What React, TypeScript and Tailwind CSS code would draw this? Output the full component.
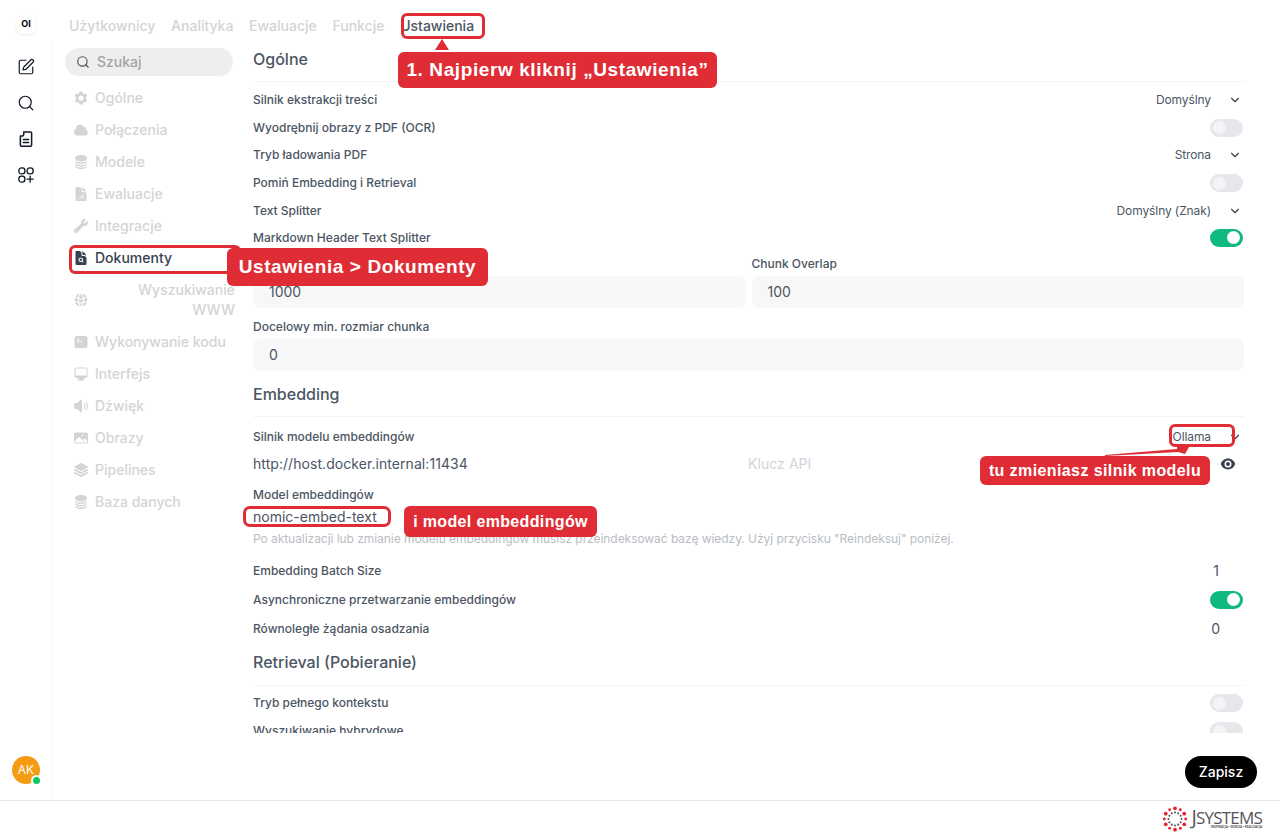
import { SquarePen, Search, ChevronDown } from 'lucide-react';
import {
  HiCog6Tooth,
  HiCloud,
  HiCircleStack,
  HiDocumentChartBar,
  HiWrench,
  HiDocumentMagnifyingGlass,
  HiGlobeAlt,
  HiCommandLine,
  HiComputerDesktop,
  HiSpeakerWave,
  HiPhoto,
  HiSquare3Stack3D,
  HiEye,
} from 'react-icons/hi2';

const tabs = ['Użytkownicy', 'Analityka', 'Ewaluacje', 'Funkcje'];

const navTop = [
  { label: 'Ogólne', icon: HiCog6Tooth },
  { label: 'Połączenia', icon: HiCloud },
  { label: 'Modele', icon: HiCircleStack },
  { label: 'Ewaluacje', icon: HiDocumentChartBar },
  { label: 'Integracje', icon: HiWrench },
];

const navBottom = [
  { label: 'Wykonywanie kodu', icon: HiCommandLine },
  { label: 'Interfejs', icon: HiComputerDesktop },
  { label: 'Dźwięk', icon: HiSpeakerWave },
  { label: 'Obrazy', icon: HiPhoto },
  { label: 'Pipelines', icon: HiSquare3Stack3D },
  { label: 'Baza danych', icon: HiCircleStack },
];

function Toggle({ on = false }: { on?: boolean }) {
  return (
    <div className={`mr-[1px] flex h-[18px] w-[33px] items-center rounded-full px-[3px] ${on ? 'justify-end bg-[#10b981]' : 'justify-start bg-[#e5e7eb]'}`}>
      <div className={`h-[13px] w-[13px] rounded-full ${on ? 'bg-white' : 'bg-[#f3f4f6]'}`} />
    </div>
  );
}

function Row({ label, h, children }: { label: string; h: string; children?: React.ReactNode }) {
  return (
    <div className={`flex items-center justify-between text-xs font-medium text-[#4b5563] ${h}`}>
      <span>{label}</span>
      {children}
    </div>
  );
}

function Picker({ value }: { value: string }) {
  return (
    <div className="flex items-center gap-[17px] pr-[2px] text-xs font-normal tracking-[-0.1px] text-[#4b5563]">
      <span>{value}</span>
      <ChevronDown size={14} strokeWidth={2} className="text-[#374151]" />
    </div>
  );
}

function Heading({ text, mt, hr = 'mt-[10px]' }: { text: string; mt: string; hr?: string }) {
  return (
    <div className={mt}>
      <div className="flex h-[24px] items-center text-base font-medium text-[#4b5563]">{text}</div>
      <div className={`border-t border-[#f3f4f6] ${hr}`} />
    </div>
  );
}

function Field({ value, className }: { value: string; className: string }) {
  return <div className={`flex h-[32px] items-center rounded-lg bg-[#f7f7f7] px-4 text-sm font-normal text-[#4b5563] ${className}`}>{value}</div>;
}

function Callout({ text, className }: { text: string; className: string }) {
  return (
    <div className={`absolute flex items-center justify-center rounded-[6px] bg-[#e02d35] font-['Liberation_Sans',sans-serif] font-bold text-white ${className}`}>
      {text}
    </div>
  );
}

function Logo() {
  const dots = Array.from({ length: 12 }, (_, i) => (i * Math.PI) / 6);
  return (
    <div className="flex items-center gap-[3px]">
      <svg width="26" height="26" viewBox="-14 -14 28 28">
        {dots.map((a, i) => (
          <circle key={i} cx={Math.sin(a) * 11.5} cy={-Math.cos(a) * 11.5} r={i % 2 === 0 ? 2 : 1.5} fill="#e8212c" />
        ))}
        {dots.map((a, i) => (
          <circle key={i} cx={Math.sin(a) * 7} cy={-Math.cos(a) * 7} r="1.1" fill="#55565a" />
        ))}
      </svg>
      <div className="flex flex-col items-end font-['Open_Sans',sans-serif] text-[#55565a]">
        <div className="text-[17px] leading-[15px] tracking-[-0.8px]">
          <span className="text-[20px]">J</span>SYSTEMS
        </div>
        <div className="text-[3px] leading-[4px] font-bold">INSPIRACJA • WIEDZA • REALIZACJA</div>
      </div>
    </div>
  );
}

export default function App() {
  return (
    <div className="relative flex h-[836px] w-[1280px] flex-col overflow-hidden bg-white font-['Inter',sans-serif]">
      <div className="flex h-[801px] shrink-0 border-b border-[#e5e5e5]">
        {/* icon rail */}
        <aside className="flex w-[52px] flex-col items-center pt-[14px] text-[#111827]">
          <div className="flex h-[20px] w-[20px] items-center justify-center rounded-md text-[9px] font-bold text-black shadow-[0_1px_2px_rgba(0,0,0,0.08)]">OI</div>
          <div className="mt-[24px] flex flex-col items-center gap-[18px]">
            <SquarePen size={18} strokeWidth={1.6} />
            <Search size={18} strokeWidth={1.6} />
            <svg width="18" height="18" viewBox="0 0 24 24" fill="none" stroke="currentColor" strokeWidth="2" strokeLinejoin="round" strokeLinecap="round">
              <path d="M9 2.500h9a1.500 1.500 0 0 1 1.500 1.500v16a1.500 1.500 0 0 1-1.500 1.500H6A1.500 1.500 0 0 1 4.500 20V8H7a2 2 0 0 0 2-2z" />
              <path d="M8.500 12.500h7M8.500 16.500h7" />
            </svg>
            <svg width="18" height="18" viewBox="0 0 24 24" fill="none" stroke="currentColor" strokeWidth="1.800" strokeLinecap="round">
              <rect x="2.500" y="2.500" width="8" height="8" rx="3.500" />
              <rect x="13.500" y="2.500" width="8" height="8" rx="3.500" />
              <rect x="2.500" y="13.500" width="8" height="8" rx="3.500" />
              <path d="M17.500 13.500v8M13.500 17.500h8" />
            </svg>
          </div>
          <div className="relative mt-auto mb-[16px] flex h-[28px] w-[28px] items-center justify-center rounded-full bg-[#f59c12] text-xs text-white">
            AK
            <span className="absolute right-[-2px] bottom-[-2px] h-[11px] w-[11px] rounded-full border-2 border-white bg-[#0fc95f]" />
          </div>
        </aside>

        <div className="flex min-w-0 flex-1 flex-col">
          {/* tabs */}
          <div className="flex h-[42px] items-start gap-[15.7px] pt-[16px] pl-[17px] text-sm leading-[20px] font-medium text-[#d4d4d4]">
            {tabs.map((t) => (
              <span key={t}>{t}</span>
            ))}
            <span className="text-[#4b5563]">Ustawienia</span>
          </div>

          <div className="flex min-h-0 flex-1">
            {/* settings nav */}
            <nav className="h-[758px] w-[201px] border-l border-[#f7f7f7] pt-[6px] pr-[18px] pl-[12px] text-sm font-medium text-[#d4d4d4]">
              <div className="flex h-[28px] w-[168px] items-center gap-[7px] rounded-full bg-[#eeeeee] px-[11px] text-[#a3a3a3]">
                <Search size={14} strokeWidth={2} className="text-[#4b5563]" />
                <span>Szukaj</span>
              </div>
              <div className="mt-[6px]">
                {navTop.map((n) => (
                  <div key={n.label} className="flex h-[32px] items-center gap-[6px] pl-[8px]">
                    <n.icon size={16} />
                    <span>{n.label}</span>
                  </div>
                ))}
                <div className="flex h-[32px] items-center gap-[6px] pl-[8px] text-[#374151]">
                  <HiDocumentMagnifyingGlass size={16} />
                  <span>Dokumenty</span>
                </div>
                <div className="flex h-[52px] items-center justify-between pl-[8px]">
                  <HiGlobeAlt size={16} />
                  <span className="w-[110px] text-right leading-[20px]">Wyszukiwanie WWW</span>
                </div>
                {navBottom.map((n) => (
                  <div key={n.label} className="flex h-[32px] items-center gap-[6px] pl-[8px]">
                    <n.icon size={16} />
                    <span>{n.label}</span>
                  </div>
                ))}
              </div>
            </nav>

            {/* settings body */}
            <main className="relative min-w-0 flex-1">
              <div className="h-[691px] w-[991px] overflow-hidden">
                <Heading text="Ogólne" mt="mt-[5px]" />
                <div className="pt-[4px]">
                  <Row label="Silnik ekstrakcji treści" h="h-[28px]"><Picker value="Domyślny" /></Row>
                  <Row label="Wyodrębnij obrazy z PDF (OCR)" h="h-[27px]"><Toggle /></Row>
                  <Row label="Tryb ładowania PDF" h="h-[28px]"><Picker value="Strona" /></Row>
                  <Row label="Pomiń Embedding i Retrieval" h="h-[28px]"><Toggle /></Row>
                  <Row label="Text Splitter" h="h-[27px]"><Picker value="Domyślny (Znak)" /></Row>
                  <Row label="Markdown Header Text Splitter" h="h-[27px]"><Toggle on /></Row>
                </div>
                <div className="mt-[3px] flex gap-[6px] text-xs font-medium text-[#4b5563]">
                  <div className="flex-1">
                    <div className="h-[20px] leading-[20px]">Rozmiar chunka</div>
                    <Field value="1000" className="mt-[2px]" />
                  </div>
                  <div className="flex-1">
                    <div className="h-[20px] leading-[20px]">Chunk Overlap</div>
                    <Field value="100" className="mt-[2px]" />
                  </div>
                </div>
                <div className="mt-[9px] h-[20px] text-xs leading-[20px] font-medium text-[#4b5563]">Docelowy min. rozmiar chunka</div>
                <Field value="0" className="mt-[2px]" />

                <Heading text="Embedding" mt="mt-[11px]" />
                <div className="pt-[6px]">
                  <Row label="Silnik modelu embeddingów" h="h-[28px]"><Picker value="Ollama" /></Row>
                </div>
                <div className="flex h-[26px] items-center text-sm tracking-[0.06px] text-[#4b5563]">
                  <span className="w-[495px]">http://host.docker.internal:11434</span>
                  <span className="text-[#d1d5db]">Klucz API</span>
                  <HiEye size={16} className="mr-[8px] ml-auto text-[#374151]" />
                </div>
                <div className="mt-[8px] h-[20px] text-xs leading-[20px] font-medium text-[#4b5563]">Model embeddingów</div>
                <div className="mt-[2px] flex h-[20px] items-center text-sm text-[#4b5563]">nomic-embed-text</div>
                <div className="mt-[3px] h-[18px] text-xs leading-[18px] tracking-[-0.05px] text-[#b9bdc3]">
                  Po aktualizacji lub zmianie modelu embeddingów musisz przeindeksować bazę wiedzy. Użyj przycisku "Reindeksuj" poniżej.
                </div>
                <div className="pt-[8px]">
                  <Row label="Embedding Batch Size" h="h-[29px]"><span className="pr-[25px] text-sm font-normal">1</span></Row>
                  <Row label="Asynchroniczne przetwarzanie embeddingów" h="h-[29px]"><Toggle on /></Row>
                  <Row label="Równoległe żądania osadzania" h="h-[29px]"><span className="pr-[24px] text-sm font-normal">0</span></Row>
                </div>
                <Heading text="Retrieval (Pobieranie)" mt="mt-[7px]" hr="mt-[11px]" />
                <div className="pt-[3px]">
                  <Row label="Tryb pełnego kontekstu" h="h-[28px]"><Toggle /></Row>
                  <Row label="Wyszukiwanie hybrydowe" h="h-[28px]"><Toggle /></Row>
                </div>
              </div>
            </main>
          </div>
        </div>
      </div>

      {/* save button */}
      <div className="absolute top-[756px] left-[1185px] flex h-[32px] w-[72px] items-center justify-center rounded-full bg-black text-sm font-medium text-white">
        Zapisz
      </div>

      {/* branded footer */}
      <div className="flex h-[35px] items-center justify-end pr-[18px]">
        <Logo />
      </div>

      {/* tutorial annotations */}
      <div className="absolute top-[13px] left-[401px] h-[26px] w-[84px] rounded-[6px] border-[3px] border-[#e02d35]" />
      <div className="absolute top-[39px] left-[435px] h-0 w-0 border-x-[7px] border-b-[11px] border-x-transparent border-b-[#e02d35]" />
      <Callout text="1. Najpierw kliknij „Ustawienia”" className="top-[52px] left-[398px] h-[36px] w-[319px] text-[19px] tracking-[0.6px]" />
      <div className="absolute top-[245px] left-[69px] h-[29px] w-[172px] rounded-[6px] border-[3px] border-[#e02d35]" />
      <Callout text="Ustawienia > Dokumenty" className="top-[248px] left-[227px] h-[38px] w-[261px] text-[19px] tracking-[0.6px]" />
      <div className="absolute top-[424px] left-[1169px] h-[23px] w-[66px] rounded-[6px] border-[3px] border-[#e02d35]" />
      <svg className="absolute top-[444px] left-[1105px]" width="90" height="14" viewBox="0 0 90 14">
        <polygon points="0,11 72,5 72,2 84,3 80,10 73,8 0,12" fill="#e02d35" />
      </svg>
      <Callout text="tu zmieniasz silnik modelu" className="top-[456px] left-[980px] h-[29px] w-[230px] text-[16px] tracking-[0.4px]" />
      <div className="absolute top-[506px] left-[243px] h-[21px] w-[148px] rounded-[7px] border-[3px] border-[#e02d35]" />
      <Callout text="i model embeddingów" className="top-[506px] left-[404px] h-[31px] w-[193px] text-[16px] tracking-[0.35px]" />
    </div>
  );
}
